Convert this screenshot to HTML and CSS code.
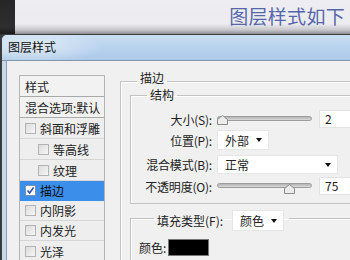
FILE: index.html
```html
<!doctype html>
<html lang="zh-CN">
  <head>
    <meta charset="UTF-8" />
    <title>图层样式</title>
    <link rel="stylesheet" href="styles.css">
  </head>

  <body>
    <div class="top">
      <div class="top-strip"></div>
      <div class="top-area">
        <span class="caption">图层样式如下</span>
      </div>
    </div>

    <div class="dialog">
      <div class="titlebar">图层样式</div>

      <div class="dialog-body">
        <div class="style-list">
          <div class="list-row list-head">样式</div>
          <div class="list-row list-head">混合选项:默认</div>
          <div class="list-row"><span class="check"></span>斜面和浮雕</div>
          <div class="list-row sub"><span class="check"></span>等高线</div>
          <div class="list-row sub"><span class="check"></span>纹理</div>
          <div class="list-row short selected">
            <span class="check checked">
              <svg width="9" height="9" viewBox="0 0 9 9"><path d="M1.5 4.5L3.6 7L7.6 1.5" fill="none" stroke="#2a4fb0" stroke-width="1.6"/></svg>
            </span>描边
          </div>
          <div class="list-row short"><span class="check"></span>内阴影</div>
          <div class="list-row short"><span class="check"></span>内发光</div>
          <div class="list-row short last"><span class="check"></span>光泽</div>
        </div>

        <div class="panel">
          <fieldset class="group group-stroke">
            <legend class="group-title">描边</legend>

            <fieldset class="group group-struct">
              <legend class="group-title">结构</legend>

              <div class="field field-size">
                <label class="field-label">大小(S):</label>
                <div class="slider">
                  <div class="track"></div>
                  <svg class="thumb" style="left: 0px" width="11" height="10" viewBox="0 0 11 10"><path d="M0.5 9.5V4.5L5.5 0.5L10.5 4.5V9.5Z" fill="#ececec" stroke="#8c8c8c"/></svg>
                </div>
                <div class="num">2</div>
              </div>

              <div class="field field-pos">
                <label class="field-label">位置(P):</label>
                <div class="select select-short">外部<span class="arrow"></span></div>
              </div>

              <div class="field field-blend">
                <label class="field-label">混合模式(B):</label>
                <div class="select select-long">正常<span class="arrow"></span></div>
              </div>

              <div class="field field-opacity">
                <label class="field-label">不透明度(O):</label>
                <div class="slider">
                  <div class="track"></div>
                  <svg class="thumb" style="left: 67px" width="11" height="10" viewBox="0 0 11 10"><path d="M0.5 9.5V4.5L5.5 0.5L10.5 4.5V9.5Z" fill="#ececec" stroke="#8c8c8c"/></svg>
                </div>
                <div class="num">75</div>
              </div>
            </fieldset>

            <fieldset class="group group-fill">
              <legend class="fill-legend">
                <span class="fill-label">填充类型(F):</span>
                <span class="select select-short">颜色<span class="arrow"></span></span>
              </legend>
              <div class="color-row">
                <span class="color-label">颜色:</span>
                <span class="swatch"></span>
              </div>
            </fieldset>
          </fieldset>
        </div>
      </div>
    </div>
  </body>
</html>
```

FILE: styles.css
```css
body {
  width: 350px;
  height: 260px;
  margin: 0;
  overflow: hidden;
  font-family: "Noto Sans CJK SC", "Liberation Sans", sans-serif;
  font-size: 12px;
  color: #222;
  background: #3a3a3a;
}

/* page behind the dialog */
.top {
  display: flex;
  height: 34px;
}

.top-strip {
  width: 15px;
  background: linear-gradient(to bottom, #262626 0%, #2e2e2e 80%, #1a1a1a 100%);
}

.top-area {
  flex: 1;
  display: flex;
  justify-content: flex-end;
  align-items: flex-start;
  padding-right: 5px;
  background: linear-gradient(to bottom, #eeeef2 0%, #ececf0 70%, #c8c8cc 88%, #8d8d90 100%);
}

.caption {
  margin-top: 4px;
  font-size: 19px;
  line-height: 24px;
  letter-spacing: 0.3px;
  color: #5766ab;
}

/* dialog frame */
.dialog {
  margin-left: 1px;
  border: 1px solid #3c3c3c;
  border-bottom: none;
  border-right: none;
  border-radius: 6px 0 0 0;
  background: #c6d8ec;
}

.titlebar {
  height: 25px;
  line-height: 24px;
  padding-left: 6px;
  border-radius: 5px 0 0 0;
  border-bottom: 1px solid #7f97b3;
  background:
    radial-gradient(ellipse 70px 18px at 30px 12px, rgba(255, 255, 255, 0.55), rgba(255, 255, 255, 0) 100%),
    linear-gradient(to bottom, #c9def2 0%, #b9d3ee 50%, #acc9e8 100%);
  color: #111;
}

.dialog-body {
  display: flex;
  align-items: flex-start;
  margin-left: 4px;
  height: 199px;
  box-sizing: border-box;
  padding: 10px 0 0 12px;
  border-left: 1px solid #8c9cb0;
  background: #f0f0f0;
  overflow: hidden;
}

/* left style list */
.style-list {
  flex: none;
  width: 84px;
  margin-top: 4px;
  border: 1px solid #b4b4b4;
  border-bottom: none;
  background: #eeeeee;
}

.list-row {
  display: flex;
  align-items: center;
  height: 21px;
  box-sizing: border-box;
  padding-left: 5px;
  border-bottom: 1px solid #d6d6d6;
  white-space: nowrap;
}

.list-row.short {
  height: 20px;
}

.list-row.last {
  border-bottom: none;
}

.list-head {
  background: #f2f2f2;
  border-bottom-color: #a9a9a9;
}

.list-row.sub {
  padding-left: 18px;
}

.list-row.selected {
  background: #3b8eea;
  border-bottom-color: #3b8eea;
  color: #0c0c0c;
}

.check {
  display: inline-flex;
  width: 9px;
  height: 9px;
  margin-right: 4px;
  border: 1px solid #b3b3b3;
  background: linear-gradient(135deg, #dcdcdc 0%, #f6f6f6 100%);
}

.check.checked {
  border-color: #7d8fb0;
  background: #ffffff;
}

/* right side groups */
.panel {
  flex: none;
  width: 232px;
  margin-left: 15px;
}

.group {
  margin: 0;
  padding: 0;
  min-width: 0;
  border: 1px solid #c3c3c3;
  border-right: none;
  box-shadow: inset 1px 1px 0 #ffffff;
}

.group-title {
  padding: 0 3px;
  line-height: 14px;
}

.group-stroke {
  height: 189px;
  box-sizing: border-box;
  padding-left: 9px;
  border-bottom: none;
}

.group-stroke > .group-title {
  margin-left: 7px;
  padding-bottom: 6px;
}

.group-struct {
  margin-top: -3px;
  padding: 8px 0 8px 0;
}

.group-struct > .group-title {
  margin-left: 16px;
}

.field {
  display: flex;
  align-items: center;
  gap: 5px;
}

.field-label {
  width: 81px;
  text-align: right;
  white-space: nowrap;
  letter-spacing: -0.2px;
}

.field-size {
  height: 18px;
}

.field-pos {
  margin-top: 2px;
}

.field-blend {
  margin-top: 5px;
}

.field-opacity {
  margin-top: 3px;
  height: 18px;
}

.slider {
  position: relative;
  width: 95px;
  height: 18px;
}

.track {
  margin-top: 6px;
  height: 3px;
  border: 1px solid #9c9c9c;
  border-radius: 3px;
  background: linear-gradient(to bottom, #b3b3b3, #dadada);
}

.thumb {
  position: absolute;
  top: 5px;
}

.field-opacity .thumb {
  top: 7px;
}

.num {
  width: 31px;
  height: 18px;
  box-sizing: border-box;
  line-height: 16px;
  margin-left: 2px;
  padding-left: 5px;
  background: #ffffff;
  border: 1px solid #e2e2e2;
  border-right: none;
}

.select {
  display: flex;
  align-items: center;
  justify-content: space-between;
  box-sizing: border-box;
  padding: 0 6px 0 7px;
  background: #ffffff;
  border: 1px solid #e6e6e6;
}

.select-short {
  width: 52px;
  height: 20px;
}

.select-long {
  width: 121px;
  height: 19px;
}

.arrow {
  width: 0;
  height: 0;
  border-left: 3px solid transparent;
  border-right: 3px solid transparent;
  border-top: 4px solid #111;
}

.group-fill {
  margin-top: 1px;
  padding: 0 0 0 8px;
  height: 56px;
  box-sizing: border-box;
  border-bottom: none;
}

.fill-legend {
  display: flex;
  align-items: center;
  gap: 9px;
  margin-left: 15px;
  padding: 5px 5px 0 3px;
}

.fill-legend .select {
  height: 21px;
}

.color-row {
  display: flex;
  align-items: center;
  gap: 2px;
  margin-top: 8px;
}

.swatch {
  width: 39px;
  height: 15px;
  background: #000;
  border: 1px solid #777;
}
```
